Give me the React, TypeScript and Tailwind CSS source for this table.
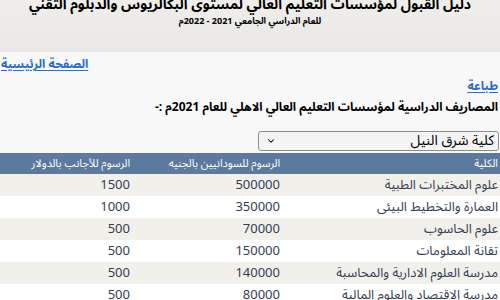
import React from "react";
import { ChevronDown } from "lucide-react";

const rows = [
  { name: "علوم المختبرات الطبية", local: "500000", foreign: "1500" },
  { name: "العمارة والتخطيط البيئى", local: "350000", foreign: "1000" },
  { name: "علوم الحاسوب", local: "70000", foreign: "500" },
  { name: "تقانة المعلومات", local: "150000", foreign: "500" },
  { name: "مدرسة العلوم الادارية والمحاسبة", local: "140000", foreign: "500" },
  { name: "مدرسة الاقتصاد والعلوم المالية", local: "80000", foreign: "500" },
];

export default function App() {
  return (
    <div
      dir="rtl"
      className="w-[500px] h-[300px] overflow-hidden bg-[#f8f8f8] text-[#323d52]"
      style={{ fontFamily: '"Noto Sans Arabic", "Noto Sans Arabic UI", "DejaVu Sans", sans-serif' }}
    >
      {/* Header band */}
      <div className="h-[52px] bg-gradient-to-b from-[#efeeeb] to-[#e9e8e4] text-center text-black overflow-hidden">
        <h1 className="font-bold text-[14px] leading-[16px] -mt-[3px] whitespace-nowrap">
          دليل القبول لمؤسسات التعليم العالي لمستوى البكالريوس والدبلوم التقني
        </h1>
        <p className="font-bold text-[9px] leading-[12px] mt-[3px]">للعام الدراسي الجامعي 2021 - 2022م</p>
      </div>

      {/* Links */}
      <div className="h-[26px] flex items-center justify-end px-[1px]">
        <a href="#" className="text-[#2a6ccb] font-bold text-[12px] leading-[16px] underline underline-offset-2">
          الصفحة الرئيسية
        </a>
      </div>
      <div className="h-[18px] flex items-center px-[2px]">
        <a href="#" className="text-[#2a6ccb] font-bold text-[12px] leading-[16px] underline underline-offset-2">
          طباعة
        </a>
      </div>

      <h2 className="font-bold text-[12px] text-black leading-[16px] mt-[4px] px-[2px] whitespace-nowrap">
        المصاريف الدراسية لمؤسسات التعليم العالي الاهلي للعام 2021م :-
      </h2>

      {/* Select */}
      <div className="pt-[15px] pb-[2px] px-[1px]">
        <div className="w-[241px] h-[20px] border border-[#8d8d8d] rounded-[3px] bg-[#f4f4f4] flex items-center justify-between pr-[4px] pl-[2px] text-black text-[14px] leading-[18px]">
          <span>كلية شرق النيل</span>
          <ChevronDown size={10} strokeWidth={2.5} className="ml-[5px]" />
        </div>
      </div>

      {/* Table */}
      <table className="w-full border-collapse text-[13px] leading-[16px]">
        <thead>
          <tr className="bg-[#5b7a9d] text-white h-[21px]">
            <th className="text-right font-normal text-[11px] leading-[14px] px-[2px] py-0 w-[218px]">الكلية</th>
            <th className="text-right font-normal text-[11px] leading-[14px] px-[2px] py-0 w-[150px]">الرسوم للسودانيين بالجنيه</th>
            <th className="text-right font-normal text-[11px] leading-[14px] px-[2px] py-0">الرسوم للأجانب بالدولار</th>
          </tr>
        </thead>
        <tbody>
          {rows.map((r, i) => (
            <tr key={r.name} className={`h-[22px] ${i % 2 === 0 ? "bg-[#f2f0eb]" : "bg-white"}`}>
              <td className="text-right px-[2px] py-0 whitespace-nowrap">{r.name}</td>
              <td className="text-right px-[2px] py-0">{r.local}</td>
              <td className="text-right px-[2px] py-0">{r.foreign}</td>
            </tr>
          ))}
        </tbody>
      </table>
    </div>
  );
}
